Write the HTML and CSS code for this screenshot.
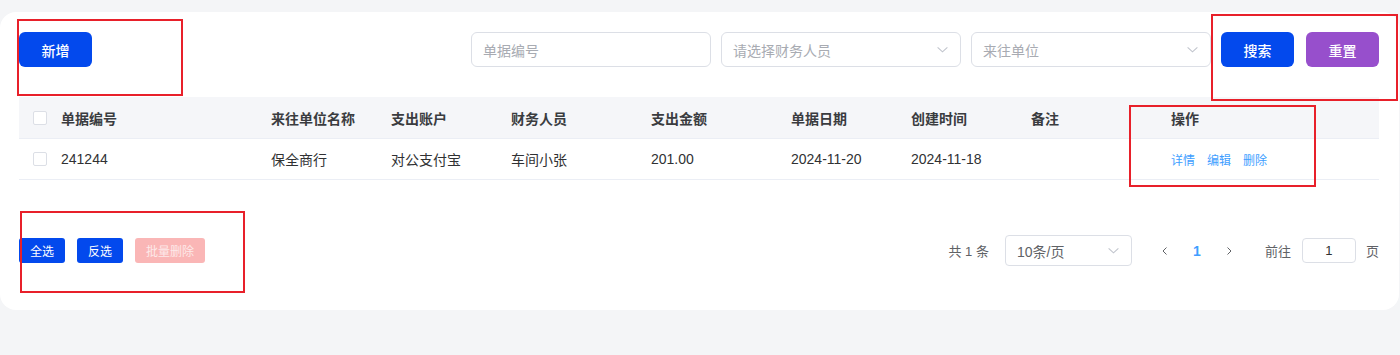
FILE: index.html
```html
<!DOCTYPE html>
<html lang="zh-CN">
<head>
  <meta charset="UTF-8" />
  <meta name="viewport" content="width=device-width, initial-scale=1.0" />
  <title>支出单</title>
  <link rel="stylesheet" href="styles.css">
</head>
<body>

<div class="card">

  <!-- toolbar -->
  <div class="toolbar">
    <button class="btn btn-primary">新增</button>
    <div class="search">
      <div class="field"><span class="ph">单据编号</span></div>
      <div class="field select"><span class="ph">请选择财务人员</span>
        <svg class="arrow" viewBox="0 0 12 12"><path d="M1.5 4 L6 8.2 L10.5 4" /></svg>
      </div>
      <div class="field select"><span class="ph">来往单位</span>
        <svg class="arrow" viewBox="0 0 12 12"><path d="M1.5 4 L6 8.2 L10.5 4" /></svg>
      </div>
      <button class="btn btn-primary">搜索</button>
      <button class="btn btn-purple">重置</button>
    </div>
  </div>

  <!-- table -->
  <div class="table">
    <div class="tr thead">
      <div class="td"><span class="check"></span></div>
      <div class="td">单据编号</div>
      <div class="td">来往单位名称</div>
      <div class="td">支出账户</div>
      <div class="td">财务人员</div>
      <div class="td">支出金额</div>
      <div class="td">单据日期</div>
      <div class="td">创建时间</div>
      <div class="td">备注</div>
      <div class="td">操作</div>
    </div>
    <div class="tr">
      <div class="td"><span class="check"></span></div>
      <div class="td">241244</div>
      <div class="td">保全商行</div>
      <div class="td">对公支付宝</div>
      <div class="td">车间小张</div>
      <div class="td">201.00</div>
      <div class="td">2024-11-20</div>
      <div class="td">2024-11-18</div>
      <div class="td"></div>
      <div class="td ops"><a>详情</a><a>编辑</a><a>删除</a></div>
    </div>
  </div>

  <!-- footer -->
  <div class="footer">
    <div class="bulk">
      <button class="btn-sm btn-primary">全选</button>
      <button class="btn-sm btn-primary">反选</button>
      <button class="btn-sm btn-danger-off">批量删除</button>
    </div>
    <div class="pager">
      <span class="total">共 1 条</span>
      <div class="size">10条/页
        <svg class="arrow" viewBox="0 0 12 12"><path d="M1.5 4 L6 8.2 L10.5 4" /></svg>
      </div>
      <div class="pages">
        <span class="pg"><svg viewBox="0 0 12 12"><path d="M7.5 2.5 L4 6 L7.5 9.5" /></svg></span>
        <span class="pg current">1</span>
        <span class="pg"><svg viewBox="0 0 12 12"><path d="M4.5 2.5 L8 6 L4.5 9.5" /></svg></span>
      </div>
      <span class="goto">前往</span>
      <div class="jump">1</div>
      <span class="goto">页</span>
    </div>
  </div>

</div>

<!-- annotation boxes -->
<div class="mark mark-add"></div>
<div class="mark mark-search"></div>
<div class="mark mark-ops"></div>
<div class="mark mark-bulk"></div>

</body>
</html>
```

FILE: styles.css
```css
/* ─── page base ─────────────────────────────────────────── */
body {
  margin: 0;
  padding-top: 12px;
  background: #f4f5f7;
  font-family: "Liberation Sans", "Noto Sans CJK SC", sans-serif;
  color: #303133;
  font-size: 14px;
}

.card {
  width: 1399px;
  height: 298px;
  box-sizing: border-box;
  background: #fff;
  border-radius: 16px;
  padding: 20px 20px 0 19px;
}

/* ─── buttons ───────────────────────────────────────────── */
button {
  font-family: inherit;
  border: none;
  color: #fff;
  cursor: pointer;
}

.btn {
  width: 73px;
  height: 35px;
  border-radius: 6px;
  font-size: 14px;
  font-weight: 500;
}

.btn-primary { background: #0349ed; }
.btn-purple  { background: #974fcc; }

.btn-sm {
  height: 25px;
  width: 46px;
  padding: 0;
  border-radius: 3px;
  font-size: 12px;
}

.btn-danger-off {
  width: 70px;
  background: #fab6b6;
  color: #fde9e9;
}

/* ─── toolbar ───────────────────────────────────────────── */
.toolbar {
  display: flex;
  justify-content: space-between;
  align-items: center;
}

.search {
  display: flex;
  align-items: center;
  gap: 10px;
}

.search .btn-purple { margin-left: 2px; }

.field {
  width: 240px;
  height: 35px;
  box-sizing: border-box;
  border: 1px solid #dcdfe6;
  border-radius: 6px;
  padding: 0 11px;
  display: flex;
  align-items: center;
  justify-content: space-between;
}

.ph { color: #a8abb2; }

.arrow {
  width: 13px;
  height: 13px;
  fill: none;
  stroke: #c0c4cc;
  stroke-width: 1;
}

/* ─── table ─────────────────────────────────────────────── */
.table {
  margin-top: 30px;
}

.tr {
  display: grid;
  grid-template-columns: 30px 210px 120px 120px 140px 140px 120px 120px 140px 1fr;
  height: 40px;
  align-items: center;
  border-bottom: 1px solid #ebeef5;
}

.thead {
  height: 41px;
  background: #f5f6f9;
  font-weight: bold;
  color: #3a3c40;
}

.td {
  padding-left: 12px;
  white-space: nowrap;
}

.tr .td:first-child { padding-left: 14px; display: flex; }

.check {
  width: 12px;
  height: 12px;
  border: 1px solid #dcdfe6;
  border-radius: 2px;
  background: #fff;
}

.ops { display: flex; gap: 12px; }
.ops a { color: #409eff; font-size: 12px; }

/* ─── footer ────────────────────────────────────────────── */
.footer {
  display: flex;
  justify-content: space-between;
  align-items: center;
  margin-top: 55px;
}

.bulk { display: flex; gap: 12px; }

.pager {
  display: flex;
  align-items: center;
  font-size: 13px;
  color: #606266;
}

.size {
  margin-left: 16px;
  width: 127px;
  height: 31px;
  box-sizing: border-box;
  border: 1px solid #dcdfe6;
  border-radius: 4px;
  padding: 0 11px;
  display: flex;
  align-items: center;
  justify-content: space-between;
  font-size: 14px;
}

.pages {
  display: flex;
  margin: 0 20px 0 17px;
}

.pg {
  width: 32px;
  height: 28px;
  display: flex;
  align-items: center;
  justify-content: center;
  font-size: 14px;
}

.pg svg {
  width: 12px;
  height: 12px;
  fill: none;
  stroke: #606266;
  stroke-width: 1;
}

.pg.current { color: #409eff; font-weight: bold; }

.jump {
  width: 54px;
  height: 25px;
  box-sizing: border-box;
  margin: 0 10px 0 11px;
  border: 1px solid #dcdfe6;
  border-radius: 4px;
  display: flex;
  align-items: center;
  justify-content: center;
  color: #303133;
}

/* ─── red annotation boxes ──────────────────────────────── */
.mark {
  position: absolute;
  border: 2px solid #e8202a;
  box-sizing: border-box;
}

.mark-add    { left: 17px;   top: 19px;  width: 166px; height: 77px; }
.mark-search { left: 1211px; top: 14px;  width: 187px; height: 87px; }
.mark-ops    { left: 1129px; top: 105px; width: 187px; height: 82px; }
.mark-bulk   { left: 20px;   top: 211px; width: 225px; height: 82px; }
```
